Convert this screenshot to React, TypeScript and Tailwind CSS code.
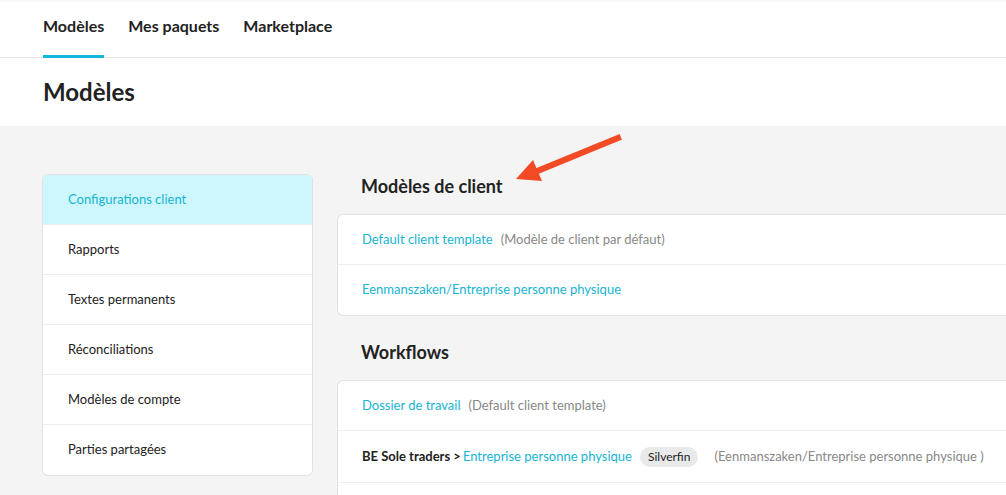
const cyan = 'text-[#17b4d3]'

function SideItem({ label, active }: { label: string; active?: boolean }) {
  return (
    <div
      className={
        'h-[50px] flex items-center pl-[25px] text-[13px] border-b border-[#efefef] last:border-b-0 ' +
        (active ? 'bg-[#cdf7fc] ' + cyan : 'text-[#222]')
      }
    >
      {label}
    </div>
  )
}

function Row({ children, last }: { children: React.ReactNode; last?: boolean }) {
  return (
    <div
      className={
        'h-[50px] flex items-center pl-[24px] text-[13px] ' + (last ? '' : 'border-b border-[#efefef]')
      }
    >
      {children}
    </div>
  )
}

export default function App() {
  return (
    <div
      className="relative w-[1006px] h-[495px] overflow-hidden bg-[#f4f4f4] text-[#222]"
      style={{ fontFamily: 'Lato, "Open Sans", sans-serif' }}
    >
      {/* Top nav */}
      <div className="bg-white h-[58px] border-b border-[#e4e4e4] shadow-[inset_0_3px_3px_-2px_rgba(0,0,0,0.06)] flex items-stretch pl-[43px] gap-[24px]">
        <div className="relative flex items-center pb-[6px] text-[16px] font-bold text-[#222]">
          Modèles
          <span className="absolute left-0 right-0 bottom-[-1px] h-[3px] bg-[#12b9d9]" />
        </div>
        <div className="flex items-center pb-[6px] text-[16px] font-bold text-[#222]">Mes paquets</div>
        <div className="flex items-center pb-[6px] text-[16px] font-bold text-[#222]">Marketplace</div>
      </div>

      {/* Page title */}
      <div className="bg-white h-[68px] flex items-center pl-[43px]">
        <h1 className="text-[24px] font-bold text-[#222] leading-none">Modèles</h1>
      </div>

      {/* Main */}
      <div className="flex pt-[49px] pl-[43px] gap-[26px] w-[1100px]">
        <div className="w-[269px] shrink-0 self-start bg-white rounded-[5px] ring-1 ring-[#e2e2e2] overflow-hidden shadow-[0_1px_1px_rgba(0,0,0,0.04)]">
          <SideItem label="Configurations client" active />
          <SideItem label="Rapports" />
          <SideItem label="Textes permanents" />
          <SideItem label="Réconciliations" />
          <SideItem label="Modèles de compte" />
          <SideItem label="Parties partagées" />
        </div>

        <div className="flex-1">
          <h2 className="h-[24px] flex items-center pl-[23px] pb-[2px] text-[18px] font-bold text-[#222] mb-[16px]">
            Modèles de client
          </h2>
          <div className="bg-white rounded-[5px] ring-1 ring-[#e2e2e2]">
            <Row>
              <span className={cyan}>Default client template</span>
              <span className="ml-[8px] text-[#888]">(Modèle de client par défaut)</span>
            </Row>
            <Row last>
              <span className={cyan}>Eenmanszaken/Entreprise personne physique</span>
            </Row>
          </div>

          <h2 className="h-[24px] flex items-center pl-[23px] pb-[2px] text-[18px] font-bold text-[#222] mt-[26px] mb-[16px]">
            Workflows
          </h2>
          <div className="bg-white rounded-[5px] ring-1 ring-[#e2e2e2]">
            <Row>
              <span className={cyan}>Dossier de travail</span>
              <span className="ml-[8px] text-[#888]">(Default client template)</span>
            </Row>
            <div className="h-[52px] flex items-center pl-[24px] text-[13px] border-b border-[#efefef]">
              <span className="font-bold text-[#222]">BE Sole traders &gt;</span>
              <span className={cyan + ' ml-[2px]'}>Entreprise personne physique</span>
              <span className="ml-[8px] h-[20px] px-[8px] rounded-full bg-[#e9e9e9] text-[12px] text-[#222] flex items-center">
                Silverfin
              </span>
              <span className="ml-[16px] text-[#888]">(Eenmanszaken/Entreprise personne physique )</span>
            </div>
            <Row last>
              <span className={cyan}>&nbsp;</span>
            </Row>
          </div>
        </div>
      </div>

      {/* Annotation arrow */}
      <svg className="absolute left-[505px] top-[125px]" width="125" height="65" viewBox="505 125 125 65">
        <line x1="618" y1="138" x2="535" y2="172" stroke="#f24a25" strokeWidth="6" strokeLinecap="square" />
        <polygon points="516,179 533,160 542,181" fill="#f24a25" />
      </svg>
    </div>
  )
}
